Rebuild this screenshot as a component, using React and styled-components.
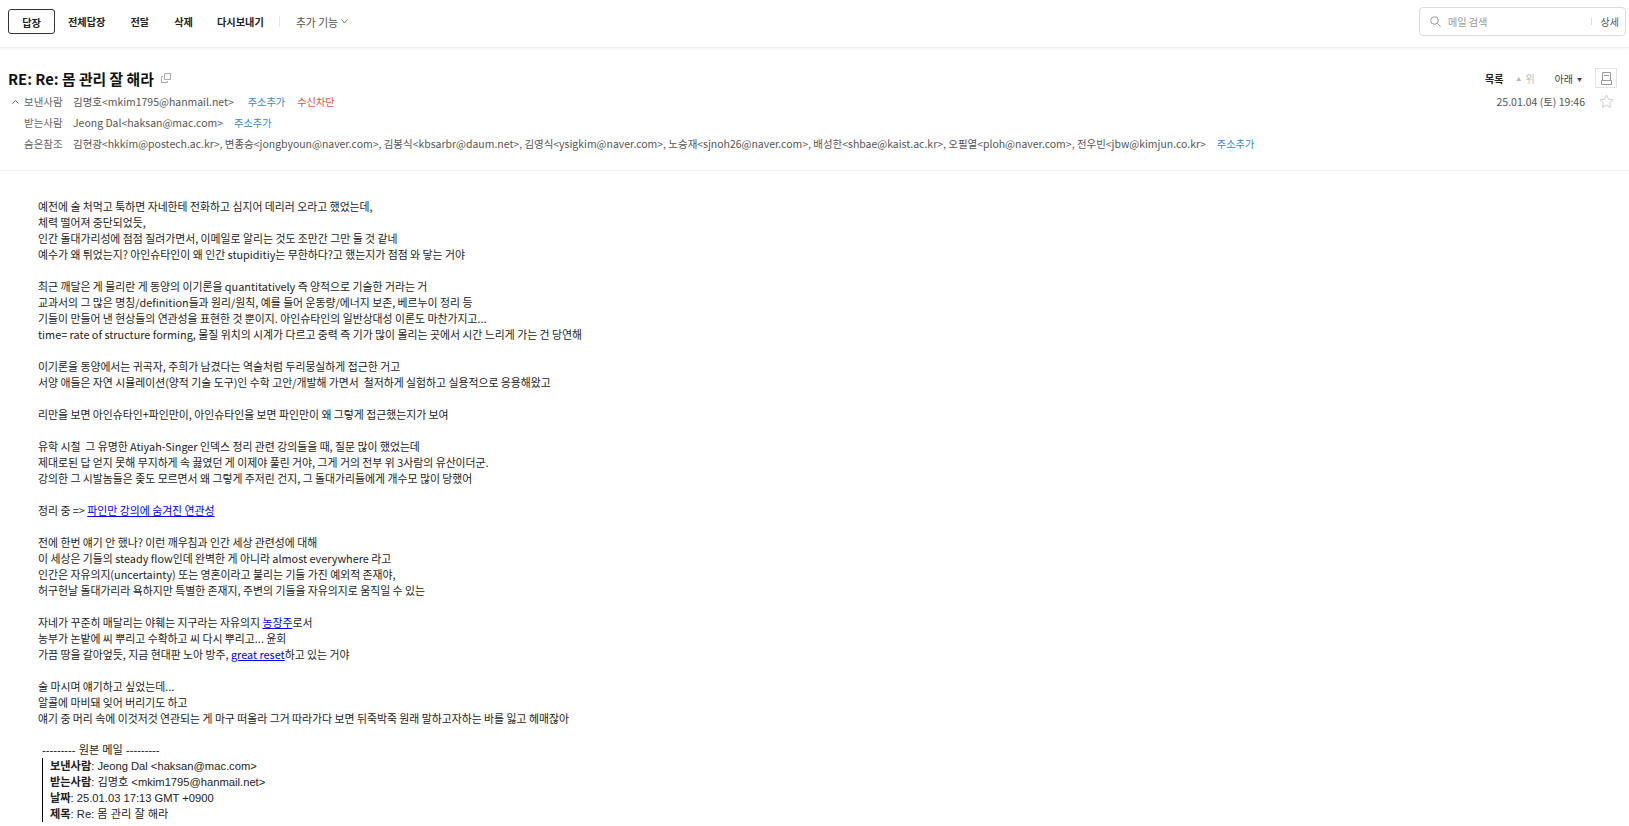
import styled, { createGlobalStyle } from "styled-components";

const GlobalStyle = createGlobalStyle`
  html, body {
    margin: 0;
    padding: 0;
    height: 100%;
    overflow: hidden;
    background: #fff;
  }
  body {
    font-family: "Noto Sans CJK KR", "Noto Sans", sans-serif;
    font-size: 12px;
    color: #222;
  }
`;

const BodyLink = styled.a`
  color: #0000ee;
  text-decoration: underline;
`;

const ccList = [
  "김현광<hkkim@postech.ac.kr>",
  "변종승<jongbyoun@naver.com>",
  "김봉식<kbsarbr@daum.net>",
  "김영식<ysigkim@naver.com>",
  "노승재<sjnoh26@naver.com>",
  "배성한<shbae@kaist.ac.kr>",
  "오필열<ploh@naver.com>",
  "전우빈<jbw@kimjun.co.kr>",
];

const paragraphs = [
  [
    "예전에 술 처먹고 툭하면 자네한테 전화하고 심지어 데리러 오라고 했었는데,",
    "체력 떨어져 중단되었듯,",
    "인간 돌대가리성에 점점 질려가면서, 이메일로 알리는 것도 조만간 그만 둘 것 같네",
    "예수가 왜 튀었는지? 아인슈타인이 왜 인간 stupiditiy는 무한하다?고 했는지가 점점 와 닿는 거야",
  ],
  [
    "최근 깨달은 게 물리란 게 동양의 이기론을 quantitatively 즉 양적으로 기술한 거라는 거",
    "교과서의 그 많은 명칭/definition들과 원리/원칙, 예를 들어 운동량/에너지 보존, 베르누이 정리 등",
    "기들이 만들어 낸 현상들의 연관성을 표현한 것 뿐이지. 아인슈타인의 일반상대성 이론도 마찬가지고...",
    "time= rate of structure forming, 물질 위치의 시계가 다르고 중력 즉 기가 많이 몰리는 곳에서 시간 느리게 가는 건 당연해",
  ],
  [
    "이기론을 동양에서는 귀곡자, 주희가 남겼다는 역술처럼 두리뭉실하게 접근한 거고",
    "서양 애들은 자연 시뮬레이션(양적 기술 도구)인 수학 고안/개발해 가면서  철저하게 실험하고 실용적으로 응용해왔고",
  ],
  ["리만을 보면 아인슈타인+파인만이, 아인슈타인을 보면 파인만이 왜 그렇게 접근했는지가 보여"],
  [
    "유학 시절  그 유명한 Atiyah-Singer 인덱스 정리 관련 강의들을 때, 질문 많이 했었는데",
    "제대로된 답 얻지 못해 무지하게 속 끓였던 게 이제야 풀린 거야, 그게 거의 전부 위 3사람의 유산이더군.",
    "강의한 그 시발놈들은 좆도 모르면서 왜 그렇게 주저린 건지, 그 돌대가리들에게 개수모 많이 당했어",
  ],
  [
    <>
      정리 중 =&gt; <BodyLink href="#">파인만 강의에 숨겨진 연관성</BodyLink>
    </>,
  ],
  [
    "전에 한번 얘기 안 했나? 이런 깨우침과 인간 세상 관련성에 대해",
    "이 세상은 기들의 steady flow인데 완벽한 게 아니라 almost everywhere 라고",
    "인간은 자유의지(uncertainty) 또는 영혼이라고 불리는 기들 가진 예외적 존재야,",
    "허구헌날 돌대가리라 욕하지만 특별한 존재지, 주변의 기들을 자유의지로 움직일 수 있는",
  ],
  [
    <>
      자네가 꾸준히 매달리는 야훼는 지구라는 자유의지 <BodyLink href="#">농장주</BodyLink>로서
    </>,
    "농부가 논밭에 씨 뿌리고 수확하고 씨 다시 뿌리고... 윤회",
    <>
      가끔 땅을 갈아엎듯, 지금 현대판 노아 방주, <BodyLink href="#">great reset</BodyLink>하고 있는 거야
    </>,
  ],
  [
    "술 마시며 얘기하고 싶었는데...",
    "알콜에 마비돼 잊어 버리기도 하고",
    "얘기 중 머리 속에 이것저것 연관되는 게 마구 떠올라 그거 따라가다 보면 뒤죽박죽 원래 말하고자하는 바를 잃고 헤매잖아",
  ],
];

const App = () => {
  return (
    <Page>
      <GlobalStyle />
      <Toolbar>
        <ReplyButton>답장</ReplyButton>
        <ToolButton $gap={13}>전체답장</ToolButton>
        <ToolButton $gap={25}>전달</ToolButton>
        <ToolButton $gap={25}>삭제</ToolButton>
        <ToolButton $gap={24}>다시보내기</ToolButton>
        <ToolDivider />
        <MoreButton>
          추가 기능
          <MoreChevron width="7" height="5" viewBox="0 0 7 5" fill="none">
            <path d="M.5.5 3.500 4 6.500.5" stroke="#777" />
          </MoreChevron>
        </MoreButton>
        <SearchBox>
          <svg width="11" height="11" viewBox="0 0 11 11" fill="none">
            <circle cx="4.500" cy="4.500" r="3.800" stroke="#999" />
            <path d="m7.300 7.300 3.200 3.200" stroke="#999" />
          </svg>
          <SearchText>메일 검색</SearchText>
          <SearchDivider />
          <SearchDetail>상세</SearchDetail>
        </SearchBox>
      </Toolbar>
      <MailHeader>
        <HeaderMain>
          <TitleRow>
            <Title>RE: Re: 몸 관리 잘 해라</Title>
            <svg width="10" height="10" viewBox="0 0 10 10" fill="none">
              <path d="M3.500.5h6v6h-6z" stroke="#aaa" />
              <path d="M2 3.500H.5v6h6V8" stroke="#aaa" />
            </svg>
          </TitleRow>
          <MetaRow>
            <Caret>
              <svg width="7" height="4" viewBox="0 0 7 4" fill="none">
                <path d="M.5 3.500 3.500.5l3 3" stroke="#555" />
              </svg>
            </Caret>
            <MetaLabel>보낸사람</MetaLabel>
            <MetaValue>김명호&lt;mkim1795@hanmail.net&gt;</MetaValue>
            <AddAction $gap={14}>주소추가</AddAction>
            <BlockAction>수신차단</BlockAction>
          </MetaRow>
          <MetaRow>
            <Caret />
            <MetaLabel>받는사람</MetaLabel>
            <MetaValue>Jeong Dal&lt;haksan@mac.com&gt;</MetaValue>
            <AddAction $gap={11}>주소추가</AddAction>
          </MetaRow>
          <MetaRow>
            <Caret />
            <MetaLabel>숨은참조</MetaLabel>
            <MetaValue>{ccList.join(", ")}</MetaValue>
            <AddAction $gap={11}>주소추가</AddAction>
          </MetaRow>
        </HeaderMain>
        <HeaderSide>
          <NavRow>
            <NavList>목록</NavList>
            <NavUp>
              <span>▲</span>위
            </NavUp>
            <NavDown>
              아래<span>▼</span>
            </NavDown>
            <PrintButton>
              <svg width="11" height="13" viewBox="0 0 11 13" fill="none">
                <path d="M1.500.5h8v8h-8zM.5 8.500h10v4H.5zM3 3.500h5" stroke="#999" />
              </svg>
            </PrintButton>
          </NavRow>
          <DateRow>
            <DateText>25.01.04 (토) 19:46</DateText>
            <StarIcon width="15" height="14" viewBox="0 0 15 14" fill="none">
              <path
                d="m7.500 1 2 4.200 4.500.6-3.300 3.100.8 4.500-4-2.200-4 2.200.8-4.500L1 5.800l4.500-.6z"
                stroke="#ccc"
              />
            </StarIcon>
          </DateRow>
        </HeaderSide>
      </MailHeader>
      <MailBody>
        {paragraphs.map((lines, i) => (
          <Paragraph key={i}>
            {lines.map((line, j) => (
              <Line key={j}>{line}</Line>
            ))}
          </Paragraph>
        ))}
        <Original>
          <OriginalTitle>--------- 원본 메일 ---------</OriginalTitle>
          <Quoted>
            <QuoteLine>
              <b>보낸사람</b>: Jeong Dal &lt;haksan@mac.com&gt;
            </QuoteLine>
            <QuoteLine>
              <b>받는사람</b>: 김명호 &lt;mkim1795@hanmail.net&gt;
            </QuoteLine>
            <QuoteLine>
              <b>날짜</b>: 25.01.03 17:13 GMT +0900
            </QuoteLine>
            <QuoteLine>
              <b>제목</b>: Re: 몸 관리 잘 해라
            </QuoteLine>
          </Quoted>
        </Original>
      </MailBody>
    </Page>
  );
};

const Page = styled.div`
  height: 826px;
  overflow: hidden;
`;

const Toolbar = styled.div`
  height: 48px;
  box-sizing: border-box;
  padding: 9px 3px 0 8px;
  display: flex;
  align-items: flex-start;
  border-bottom: 1px solid #eee;
  box-shadow: 0 1px 2px rgba(0, 0, 0, 0.05);
`;

const ToolButton = styled.div`
  height: 24px;
  line-height: 26px;
  font-size: 10.200px;
  font-weight: 700;
  color: #222;
  margin-left: ${({ $gap }) => $gap}px;
  white-space: nowrap;
`;

const ReplyButton = styled.div`
  width: 47px;
  height: 25px;
  line-height: 25px;
  box-sizing: border-box;
  border: 1px solid #333;
  border-radius: 3px;
  text-align: center;
  font-size: 10.200px;
  font-weight: 700;
  color: #222;
`;

const ToolDivider = styled.div`
  width: 1px;
  height: 11px;
  background: #e4e4e4;
  margin: 7px 0 0 15px;
`;

const MoreButton = styled.div`
  height: 26px;
  font-size: 10.800px;
  color: #555;
  margin-left: 16px;
  display: flex;
  align-items: center;
  gap: 3px;
`;

const MoreChevron = styled.svg`
  margin-bottom: 2px;
`;

const SearchBox = styled.div`
  margin-left: auto;
  margin-top: -2px;
  width: 207px;
  height: 29px;
  box-sizing: border-box;
  border: 1px solid #ddd;
  border-radius: 4px;
  padding: 0 6px 0 10px;
  display: flex;
  align-items: center;
`;

const SearchText = styled.span`
  flex: 1;
  margin-left: 7px;
  font-size: 10.100px;
  color: #999;
`;

const SearchDivider = styled.span`
  width: 1px;
  height: 7px;
  background: #ddd;
  margin-right: 9px;
`;

const SearchDetail = styled.span`
  font-size: 10px;
  color: #555;
`;

const MailHeader = styled.div`
  display: flex;
  justify-content: space-between;
  padding: 17px 12px 14px 8px;
  height: 123px;
  box-sizing: border-box;
  border-bottom: 1px solid #f0f0f0;
`;

const HeaderMain = styled.div`
  display: flex;
  flex-direction: column;
`;

const TitleRow = styled.div`
  display: flex;
  align-items: center;
  gap: 7px;
  height: 26px;
`;

const Title = styled.h1`
  margin: 0;
  font-size: 14.800px;
  font-weight: 700;
  color: #111;
`;

const MetaRow = styled.div`
  display: flex;
  align-items: center;
  height: 21px;
  font-size: 10.480px;
  color: #555;
  white-space: nowrap;
`;

const Caret = styled.span`
  width: 16px;
  padding-left: 4px;
  box-sizing: border-box;
  display: flex;
  align-items: center;
`;

const MetaLabel = styled.span`
  width: 49px;
  color: #666;
`;

const MetaValue = styled.span`
  color: #555;
`;

const AddAction = styled.span`
  color: #3a87c8;
  font-size: 10.200px;
  margin-left: ${({ $gap }) => $gap}px;
`;

const BlockAction = styled.span`
  color: #d9533f;
  font-size: 10.200px;
  margin-left: 12px;
`;

const HeaderSide = styled.div`
  display: flex;
  flex-direction: column;
  align-items: flex-end;
  padding-top: 2px;
`;

const NavRow = styled.div`
  display: flex;
  align-items: center;
  font-size: 10px;
  height: 22px;
  white-space: nowrap;
`;

const NavList = styled.span`
  font-weight: 700;
  color: #222;
`;

const NavUp = styled.span`
  color: #bbb;
  margin-left: 13px;
  span {
    font-size: 5px;
    margin-right: 4px;
    vertical-align: 2px;
  }
`;

const NavDown = styled.span`
  color: #444;
  margin-left: 20px;
  span {
    font-size: 5px;
    margin-left: 4px;
    vertical-align: 2px;
  }
`;

const PrintButton = styled.span`
  width: 22px;
  height: 20px;
  margin-left: 13px;
  border: 1px solid #e2e2e2;
  box-sizing: border-box;
  display: flex;
  align-items: center;
  justify-content: center;
`;

const DateRow = styled.div`
  display: flex;
  align-items: center;
  gap: 14px;
  margin-top: 3px;
  height: 18px;
`;

const StarIcon = styled.svg`
  margin-right: 3px;
`;

const DateText = styled.span`
  font-size: 10.500px;
  color: #555;
`;

const MailBody = styled.div`
  padding: 27px 0 0 38px;
  font-size: 10.870px;
  line-height: 16px;
  color: #222;
`;

const Paragraph = styled.div`
  margin-bottom: 16px;
`;

const Line = styled.div`
  white-space: pre;
`;

const Original = styled.div`
  margin: 1px 0 0 4px;
  font-family: "Liberation Sans", "Noto Sans CJK KR", sans-serif;
  font-size: 11.200px;
`;

const OriginalTitle = styled.div`
  line-height: 16px;
`;

const Quoted = styled.div`
  border-left: 1px solid #000;
  padding-left: 7px;
`;

const QuoteLine = styled.div`
  line-height: 16px;
`;

export default App;
